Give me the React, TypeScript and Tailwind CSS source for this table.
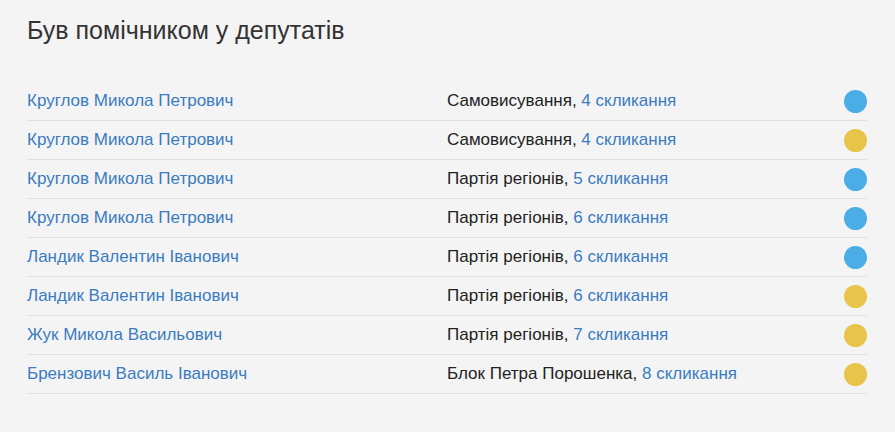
const rows = [
  { name: "Круглов Микола Петрович", party: "Самовисування", term: "4 скликання", color: "blue" },
  { name: "Круглов Микола Петрович", party: "Самовисування", term: "4 скликання", color: "yellow" },
  { name: "Круглов Микола Петрович", party: "Партія регіонів", term: "5 скликання", color: "blue" },
  { name: "Круглов Микола Петрович", party: "Партія регіонів", term: "6 скликання", color: "blue" },
  { name: "Ландик Валентин Іванович", party: "Партія регіонів", term: "6 скликання", color: "blue" },
  { name: "Ландик Валентин Іванович", party: "Партія регіонів", term: "6 скликання", color: "yellow" },
  { name: "Жук Микола Васильович", party: "Партія регіонів", term: "7 скликання", color: "yellow" },
  { name: "Брензович Василь Іванович", party: "Блок Петра Порошенка", term: "8 скликання", color: "yellow" },
];

export default function App() {
  return (
    <div className="min-h-[432px] bg-[#f4f4f4] px-[27px] pt-[15px] font-['Liberation_Sans',Arial,sans-serif]">
      <h2 className="text-[25px] leading-[30px] text-[#333]">Був помічником у депутатів</h2>
      <ul className="mt-[37px] w-[840px]">
        {rows.map((row, index) => (
          <li className="flex h-[39px] items-center border-b border-[#e0e0e0] text-[17px]" key={index}>
            <a className="w-[420px] text-[#3a7cbf]" href="#">{row.name}</a>
            <span className="flex-1 text-[#222]">
              {row.party}, <a className="text-[#3a7cbf]" href="#">{row.term}</a>
            </span>
            <span className={`h-[23px] w-[23px] rounded-full ${row.color === "blue" ? "bg-[#4aade6]" : "bg-[#e8c44b]"}`} />
          </li>
        ))}
      </ul>
    </div>
  );
}
